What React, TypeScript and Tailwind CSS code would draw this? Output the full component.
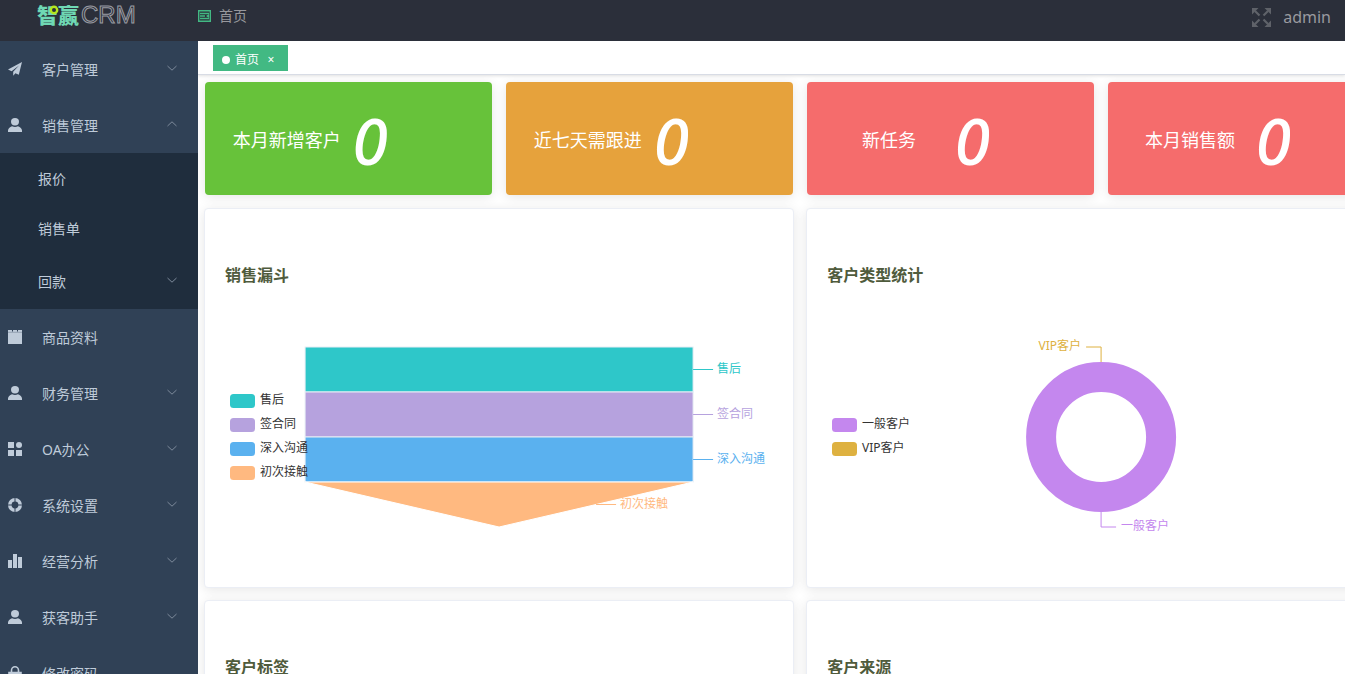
import React, { useState } from 'react';

const iconClass = 'w-[14px] h-[14px] shrink-0';

const PromotionIcon = () => (
  <svg className={iconClass} viewBox="0 0 14 14" fill="currentColor">
    <path d="M14 0 0 7.600l3.600 1.600L11 3.600 5.200 9.800v4l2.200-2.600 3.400 1.600z" />
  </svg>
);

const UserIcon = () => (
  <svg className={iconClass} viewBox="0 0 14 14" fill="currentColor">
    <ellipse cx="7" cy="3.7" rx="4" ry="3.7" />
    <path d="M0 14v-1.500C0 10.500 1.800 9 4 8.200c2 .9 4 .9 6 0 2.200.8 4 2.300 4 4.300V14z" />
  </svg>
);

const GoodsIcon = () => (
  <svg className={iconClass} viewBox="0 0 14 14" fill="currentColor">
    <path d="M0 0h4v1.500h1V0h4v1.500h1V0h4v14H0z" />
    <path d="M0 2.300h14" stroke="#304156" strokeWidth="0.5" strokeOpacity="0.6" />
  </svg>
);

const MenuIcon = () => (
  <svg className={iconClass} viewBox="0 0 14 14" fill="currentColor">
    <path d="M0 0h6v6H0zM0 8h6v6H0zM8 8h6v6H8z" />
    <circle cx="11" cy="3" r="3" />
  </svg>
);

const HelpIcon = () => (
  <svg className={iconClass} viewBox="0 0 14 14" fill="none">
    <circle cx="7" cy="7" r="5.2" stroke="currentColor" strokeWidth="3.6" />
    <path d="M7 0v4M7 10v4M0 7h4M10 7h4" stroke="#304156" strokeWidth="1" />
  </svg>
);

const DataIcon = () => (
  <svg className={iconClass} viewBox="0 0 14 14" fill="currentColor">
    <path d="M0 6h4v8H0zM5 0h4v14H5zM10 3h4v11h-4z" />
  </svg>
);

const LockIcon = () => (
  <svg className={iconClass} viewBox="0 0 14 14" fill="none" stroke="currentColor" strokeWidth="1.6">
    <path d="M3.500 6V4.300a3.500 3.500 0 0 1 7 0V6" />
    <path d="M1 6.500h12v7H1z" fill="currentColor" />
  </svg>
);

const Chevron = ({ open }: { open?: boolean }) => (
  <svg className="w-3 h-3 ml-auto mb-[2px] text-[#7d8a9b]" viewBox="0 0 12 12" fill="none" stroke="currentColor">
    <path d={open ? 'M1.5 8 6 3.8 10.5 8' : 'M1.5 4 6 8.2 10.5 4'} />
  </svg>
);

interface MenuItem {
  title: string;
  icon: React.FC;
  arrow?: boolean;
  children?: { title: string; arrow?: boolean }[];
}

const menus: MenuItem[] = [
  { title: '客户管理', icon: PromotionIcon, arrow: true },
  {
    title: '销售管理',
    icon: UserIcon,
    arrow: true,
    children: [{ title: '报价' }, { title: '销售单' }, { title: '回款', arrow: true }],
  },
  { title: '商品资料', icon: GoodsIcon },
  { title: '财务管理', icon: UserIcon, arrow: true },
  { title: 'OA办公', icon: MenuIcon, arrow: true },
  { title: '系统设置', icon: HelpIcon, arrow: true },
  { title: '经营分析', icon: DataIcon, arrow: true },
  { title: '获客助手', icon: UserIcon, arrow: true },
  { title: '修改密码', icon: LockIcon },
];

const stats = [
  { label: '本月新增客户', value: 0, color: 'bg-[#67c23a]' },
  { label: '近七天需跟进', value: 0, color: 'bg-[#e6a23c]' },
  { label: '新任务', value: 0, color: 'bg-[#f56c6c]' },
  { label: '本月销售额', value: 0, color: 'bg-[#f56c6c]' },
];

const funnel = [
  { name: '售后', color: '#2ec7c9' },
  { name: '签合同', color: '#b6a2de' },
  { name: '深入沟通', color: '#5ab1ef' },
  { name: '初次接触', color: '#ffb980' },
];

const customerTypes = [
  { name: '一般客户', color: '#c487ee' },
  { name: 'VIP客户', color: '#deb140' },
];

const Header = () => (
  <header className="flex h-[41px] shrink-0 items-start bg-[#2b2f3a]">
    <div className="w-[198px] pl-[37px]">
      <svg className="block h-8 w-[102px] overflow-visible" viewBox="0 0 102 32">
        <text x="0" y="23" fontSize="21" fontWeight="900" fill="#6fd8b4" fontFamily="'Noto Sans CJK SC', sans-serif">智赢</text>
        <circle cx="17" cy="10" r="3.2" fill="#2b2f3a" stroke="#b4e61e" strokeWidth="2.4" />
        <text x="44" y="23" fontSize="24" fill="none" stroke="#9a9ca3" strokeWidth="1" fontFamily="'Liberation Sans', sans-serif">CRM</text>
      </svg>
    </div>
    <button className="mt-[10px] text-[#42b983]" aria-label="menu">
      <svg className="h-[12px] w-[13px]" viewBox="0 0 13 12" fill="none" stroke="currentColor" strokeWidth="1.4">
        <path d="M0 .7h13M0 11.300h13M.7 0v12M12.300 0v12M2 3.500h9M2 6h5M2 8.500h9" />
        <path d="M11 4v4L8 6z" fill="currentColor" stroke="none" />
      </svg>
    </button>
    <a href="#" className="ml-2 mt-[5px] text-sm leading-[22px] text-[#97989d]">首页</a>
    <div className="ml-auto mt-[3px] flex items-center gap-3 pr-[14px]">
      <button aria-label="fullscreen" className="text-[#5f6269]">
        <svg className="h-[19px] w-[19px]" viewBox="0 0 19 19" fill="currentColor" stroke="currentColor" strokeWidth="2.2">
          <path d="M3 3l4.500 4.500M16 3l-4.500 4.500M3 16l4.500-4.500M16 16l-4.500-4.500" fill="none" />
          <path d="M0 0h6.500L0 6.500zM19 0h-6.500L19 6.500zM0 19h6.500L0 12.500zM19 19h-6.500l6.500-6.500z" stroke="none" />
        </svg>
      </button>
      <button className="font-['Noto_Sans'] text-base leading-7 text-[#999a9f]">admin</button>
    </div>
  </header>
);

const Sidebar = () => (
  <nav className="w-[198px] shrink-0 overflow-hidden bg-[#304156] text-sm text-[#bfcbd9]">
    {menus.map((item) => (
      <div key={item.title}>
        <a href="#" className="flex h-14 items-center pl-2 pr-5">
          <item.icon />
          <span className="ml-5 pt-[2px]">{item.title}</span>
          {item.arrow && <Chevron open={!!item.children} />}
        </a>
        {item.children && (
          <div className="bg-[#1f2d3d]">
            {item.children.map((child) => (
              <a key={child.title} href="#" className={`flex items-center pl-[38px] pr-5 ${child.arrow ? 'h-14' : 'h-[50px]'}`}>
                <span className="pt-[2px]">{child.title}</span>
                {child.arrow && <Chevron />}
              </a>
            ))}
          </div>
        )}
      </div>
    ))}
  </nav>
);

const TagsView = () => {
  const [open, setOpen] = useState(true);
  return (
    <div className="relative flex h-[34px] shrink-0 items-start border-b border-[#d8dce5] bg-white pl-[15px] pt-1 shadow-[0_1px_3px_0_rgba(0,0,0,0.12)]">
      {open && (
        <div className="flex h-[26px] items-center bg-[#42b983] pl-[9px] pr-[13px] pt-[3px] text-xs text-white">
          <span className="h-2 w-2 rounded-full bg-white" />
          <a href="#" className="ml-[5px]">首页</a>
          <button className="ml-2 w-2" aria-label="close" onClick={() => setOpen(false)}>×</button>
        </div>
      )}
    </div>
  );
};

const Legend = ({ items, top }: { items: { name: string; color: string }[]; top: number }) => (
  <g>
    {items.map((item, i) => (
      <g key={item.name}>
        <rect x="5" y={top + i * 24} width="25" height="14" rx="3.5" fill={item.color} />
        <text x="35" y={top + i * 24 + 10} fill="#333">{item.name}</text>
      </g>
    ))}
  </g>
);

const chartClass = 'block h-[300px] w-full text-xs';

const FunnelChart = () => (
  <svg className={chartClass}>
    <svg x="50%" overflow="visible">
      {funnel.map((item, i) => {
        const y = 60 + i * 45;
        const last = i === funnel.length - 1;
        const lineX = last ? 97 : 194;
        return (
          <g key={item.name}>
            {last ? (
              <path d={`M-194 ${y}H194L0 ${y + 45}z`} fill={item.color} stroke="#fff" />
            ) : (
              <rect x="-194" y={y} width="388" height="45" fill={item.color} stroke="#e8eef5" />
            )}
            <path d={`M${lineX} ${y + 22.5}h20`} stroke={item.color} />
            <text x={lineX + 24} y={y + 26} fill={item.color}>{item.name}</text>
          </g>
        );
      })}
    </svg>
    <Legend items={funnel} top={107} />
  </svg>
);

const TypeChart = () => (
  <svg className={chartClass}>
    <svg x="50%" overflow="visible" fill="none">
      <circle cx="0" cy="150" r="60" stroke="#c487ee" strokeWidth="30" />
      <path d="M0 75V60H-15" stroke="#deb140" />
      <text x="-20" y="63" textAnchor="end" fill="#deb140">VIP客户</text>
      <path d="M0 225v15H15" stroke="#c487ee" />
      <text x="20" y="243" fill="#c487ee">一般客户</text>
    </svg>
    <Legend items={customerTypes} top={131} />
  </svg>
);

const Panel = ({ title, children }: { title: string; children?: React.ReactNode }) => (
  <section className="min-h-[380px] rounded border border-[#ebeef5] bg-white px-5 pt-[54px] shadow-[0_2px_12px_0_rgba(0,0,0,0.1)]">
    <h3 className="text-base leading-6 font-bold text-[#4f5b3c]">{title}</h3>
    {children}
  </section>
);

export default function App() {
  return (
    <div className="flex h-screen flex-col overflow-hidden font-['Noto_Sans','Noto_Sans_CJK_SC',sans-serif]">
      <Header />
      <div className="flex min-h-0 flex-1">
        <Sidebar />
        <main className="flex min-w-0 flex-1 flex-col overflow-hidden bg-white">
          <TagsView />
          {/* the dashboard grid is a little wider than the viewport */}
          <div className="w-[105%] space-y-[13px] px-[6px] pt-[7px]">
            <div className="grid grid-cols-4 gap-[14px] px-px">
              {stats.map((s) => (
                <div key={s.label} className={`flex h-[113px] items-center rounded px-5 text-white shadow-[0_2px_12px_0_rgba(0,0,0,0.1)] ${s.color}`}>
                  <span className="w-1/2 pt-[2px] text-center text-lg whitespace-nowrap">{s.label}</span>
                  <em className="pl-1 pt-1 text-[64px] leading-none font-medium">{s.value}</em>
                </div>
              ))}
            </div>
            <div className="grid grid-cols-2 gap-3">
              <Panel title="销售漏斗"><FunnelChart /></Panel>
              <Panel title="客户类型统计"><TypeChart /></Panel>
              <Panel title="客户标签" />
              <Panel title="客户来源" />
            </div>
          </div>
        </main>
      </div>
    </div>
  );
}
